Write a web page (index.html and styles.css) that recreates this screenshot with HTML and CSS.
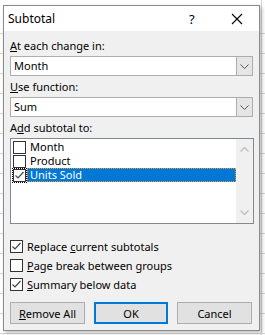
FILE: index.html
```html
<!DOCTYPE html>
<html lang="en">

<head>
    <meta charset="UTF-8">
    <title>Subtotal</title>
    <link rel="stylesheet" href="styles.css">
</head>

<body>
    <div class="dialog">
        <div class="titlebar">
            <span class="title">Subtotal</span>
            <span class="help">?</span>
            <svg class="close" width="12" height="12" viewBox="0 0 12 12">
                <path d="M1 1L11 11M11 1L1 11" stroke="#000" stroke-width="1.1" fill="none"/>
            </svg>
        </div>

        <div class="body">
            <div class="label"><u>A</u>t each change in:</div>
            <div class="combo">
                <span class="combo-value">Month</span>
                <span class="combo-btn">
                    <svg width="9" height="5" viewBox="0 0 9 5"><path d="M0.5 0.5L4.5 4.5L8.5 0.5" stroke="#555" fill="none"/></svg>
                </span>
            </div>

            <div class="label"><u>U</u>se function:</div>
            <div class="combo">
                <span class="combo-value">Sum</span>
                <span class="combo-btn">
                    <svg width="9" height="5" viewBox="0 0 9 5"><path d="M0.5 0.5L4.5 4.5L8.5 0.5" stroke="#555" fill="none"/></svg>
                </span>
            </div>

            <div class="label">A<u>d</u>d subtotal to:</div>
            <div class="listbox">
                <div class="items">
                    <div class="item">
                        <span class="box"></span>
                        <span class="item-text">Month</span>
                    </div>
                    <div class="item">
                        <span class="box"></span>
                        <span class="item-text">Product</span>
                    </div>
                    <div class="item selected">
                        <span class="box focus">
                            <svg width="11" height="11" viewBox="0 0 11 11"><path d="M1.5 5.5L4 8L9.5 2" stroke="#444" stroke-width="1.2" fill="none"/></svg>
                        </span>
                        <span class="item-text">Units Sold</span>
                    </div>
                </div>
                <div class="scrollbar">
                    <svg width="9" height="5" viewBox="0 0 9 5"><path d="M0.5 4.5L4.5 0.5L8.5 4.5" stroke="#c2c2c2" stroke-width="1.5" fill="none"/></svg>
                    <svg width="9" height="5" viewBox="0 0 9 5"><path d="M0.5 0.5L4.5 4.5L8.5 0.5" stroke="#c2c2c2" stroke-width="1.5" fill="none"/></svg>
                </div>
            </div>

            <div class="options">
                <div class="option">
                    <span class="box">
                        <svg width="11" height="11" viewBox="0 0 11 11"><path d="M1.5 5.5L4 8L9.5 2" stroke="#444" stroke-width="1.2" fill="none"/></svg>
                    </span>
                    <span>Replace <u>c</u>urrent subtotals</span>
                </div>
                <div class="option">
                    <span class="box"></span>
                    <span><u>P</u>age break between groups</span>
                </div>
                <div class="option">
                    <span class="box">
                        <svg width="11" height="11" viewBox="0 0 11 11"><path d="M1.5 5.5L4 8L9.5 2" stroke="#444" stroke-width="1.2" fill="none"/></svg>
                    </span>
                    <span><u>S</u>ummary below data</span>
                </div>
            </div>

            <div class="buttons">
                <button><u>R</u>emove All</button>
                <button class="default">OK</button>
                <button>Cancel</button>
            </div>
        </div>
    </div>
</body>

</html>
```

FILE: styles.css
```css
body {
    margin: 0;
    height: 335px;
    overflow: hidden;
    font-family: "Noto Sans", "Liberation Sans", sans-serif;
    font-size: 11px;
    line-height: 14px;
    color: #000;
    background-color: #fff;
    background-image:
        linear-gradient(to right, transparent 261px, #d4d4d4 261px, #d4d4d4 262px, transparent 262px),
        repeating-linear-gradient(to bottom, transparent 0, transparent 19px, #d4d4d4 19px, #d4d4d4 20px);
    background-position: 0 14px;
}

.dialog {
    width: 255px;
    height: 324px;
    margin: 5px 0 0 3px;
    border: 1px solid #8a8a8a;
    background: #f0f0f0;
    box-shadow: 2px 2px 4px rgba(0, 0, 0, 0.25);
    display: flex;
    flex-direction: column;
}

.titlebar {
    height: 25px;
    flex: none;
    background: #fff;
    display: flex;
    align-items: center;
    padding: 0 0 0 4px;
    font-size: 12px;
}

.title {
    flex: 1;
}

.help {
    width: 12px;
    margin-right: 30px;
    font-size: 13px;
}

.close {
    margin-right: 16px;
}

.body {
    padding: 5px 0 0 6px;
    display: flex;
    flex-direction: column;
}

.label {
    height: 19px;
    line-height: 19px;
    margin-bottom: 1px;
}

.combo {
    width: 241px;
    height: 18px;
    border: 1px solid #adadad;
    background: #fff;
    display: flex;
    align-items: stretch;
    margin-bottom: 1px;
}

.combo-value {
    flex: 1;
    line-height: 18px;
    padding-left: 3px;
}

.combo-btn {
    width: 15px;
    background: #e5e5e5;
    border-left: 1px solid #adadad;
    display: flex;
    align-items: center;
    justify-content: center;
}

.listbox {
    width: 242px;
    height: 84px;
    border: 1px solid #828790;
    background: #fff;
    display: flex;
    margin-bottom: 16px;
}

.items {
    flex: 1;
    padding: 1px 0 0 2px;
}

.item {
    display: flex;
    align-items: center;
    height: 14px;
}

.item .box {
    margin-right: 1px;
}

.item-text {
    height: 14px;
    line-height: 14px;
    padding: 0 3px;
    flex: none;
}

.selected .item-text {
    flex: 1;
    background: #0078d7;
    color: #fff;
    outline: 1px dotted #f59a23;
    outline-offset: -1px;
}

.box {
    width: 11px;
    height: 11px;
    border: 1px solid #333;
    background: #fff;
    display: flex;
    align-items: center;
    justify-content: center;
    flex: none;
}

.box.focus {
    outline: 1px dotted #000;
    outline-offset: 0;
}

.scrollbar {
    width: 17px;
    background: #f0f0f0;
    display: flex;
    flex-direction: column;
    justify-content: space-between;
    align-items: center;
    padding: 8px 0 8px 0;
}

.options {
    display: flex;
    flex-direction: column;
    gap: 6px;
}

.option {
    display: flex;
    align-items: center;
    gap: 4px;
    height: 13px;
}

.buttons {
    display: flex;
    gap: 9px;
    margin-top: 11px;
}

button {
    width: 75px;
    height: 22px;
    font-family: inherit;
    font-size: 11px;
    color: #000;
    background: #e1e1e1;
    border: 1px solid #adadad;
    padding: 0;
}

button.default {
    width: 74px;
    border: 2px solid #0078d7;
}
```
